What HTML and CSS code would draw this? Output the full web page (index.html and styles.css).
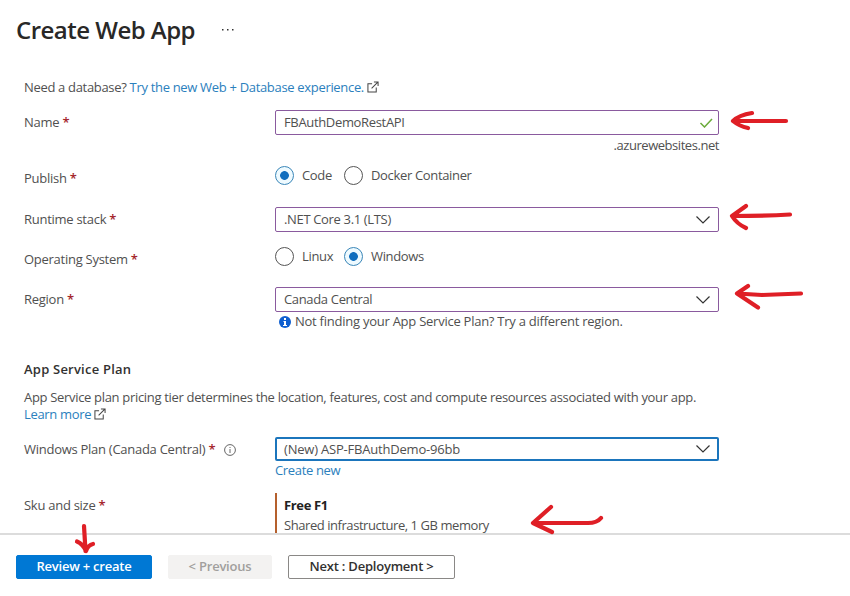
FILE: index.html
```html
<!DOCTYPE html>
<html lang="en">
<head>
    <meta charset="UTF-8">
    <meta name="viewport" content="width=device-width, initial-scale=1.0">
    <title>Create Web App</title>
    <link rel="stylesheet" href="styles.css">
</head>
<body>
    <header class="header">
        <h1>Create Web App</h1>
        <svg class="more" width="12" height="2" viewBox="0 0 12 2"><path d="M0 0h1.5v1.5H0zM5 0h1.5v1.5H5zM10 0h1.5v1.5H10z" fill="#333"/></svg>
    </header>

    <main class="content">
        <p class="intro">Need a database? <a href="#">Try the new Web + Database experience.</a>
            <svg class="external" width="12" height="12" viewBox="0 0 13 13"><path d="M5.5 3H1v9h9V7M7.5 1H12v4.5M12 1L5 8"/></svg>
        </p>

        <form id="webAppForm">
            <div class="row name">
                <label>Name <b>*</b></label>
                <div>
                    <div class="field">
                        <span>FBAuthDemoRestAPI</span>
                        <svg class="check" width="14" height="10" viewBox="0 0 14 10"><path d="M1.5 5l4 4L13 1"/></svg>
                    </div>
                    <div class="suffix">.azurewebsites.net</div>
                </div>
            </div>

            <div class="row publish">
                <label>Publish <b>*</b></label>
                <div class="radios">
                    <span class="radio checked"></span><span class="first">Code</span>
                    <span class="radio"></span><span>Docker Container</span>
                </div>
            </div>

            <div class="row stack">
                <label>Runtime stack <b>*</b></label>
                <div class="field">
                    <span>.NET Core 3.1 (LTS)</span>
                    <svg class="chevron" width="14" height="8" viewBox="0 0 14 8"><path d="M.5.5L7 7 13.5.5"/></svg>
                </div>
            </div>

            <div class="row os">
                <label>Operating System <b>*</b></label>
                <div class="radios">
                    <span class="radio"></span><span class="first">Linux</span>
                    <span class="radio checked"></span><span>Windows</span>
                </div>
            </div>

            <div class="row region">
                <label>Region <b>*</b></label>
                <div>
                    <div class="field">
                        <span>Canada Central</span>
                        <svg class="chevron" width="14" height="8" viewBox="0 0 14 8"><path d="M.5.5L7 7 13.5.5"/></svg>
                    </div>
                    <div class="hint">
                        <svg width="12" height="12" viewBox="0 0 12 12"><circle cx="6" cy="6" r="6" fill="#0f5fd0"/><path d="M5 2h2v2H5zM4.5 5H7v4h1v1H4V9h1V6h-.5z" fill="#fff"/></svg>
                        <span>Not finding your App Service Plan? Try a different region.</span>
                    </div>
                </div>
            </div>

            <h2>App Service Plan</h2>
            <p class="description">App Service plan pricing tier determines the location, features, cost and compute resources associated with your app.<br>
                <a href="#">Learn more</a>
                <svg class="external" width="12" height="12" viewBox="0 0 13 13"><path d="M5.5 3H1v9h9V7M7.5 1H12v4.5M12 1L5 8"/></svg>
            </p>

            <div class="row plan">
                <label>Windows Plan (Canada Central) <b>*</b>
                    <svg class="info" width="12" height="12" viewBox="0 0 12 12"><circle cx="6" cy="6" r="5.4"/><path d="M6 5v4M6 3v1"/></svg>
                </label>
                <div>
                    <div class="field active">
                        <span>(New) ASP-FBAuthDemo-96bb</span>
                        <svg class="chevron" width="14" height="8" viewBox="0 0 14 8"><path d="M.5.5L7 7 13.5.5"/></svg>
                    </div>
                    <a class="create" href="#">Create new</a>
                </div>
            </div>

            <div class="row sku">
                <label>Sku and size <b>*</b></label>
                <div class="tier">
                    <strong>Free F1</strong>
                    <span>Shared infrastructure, 1 GB memory</span>
                </div>
            </div>
        </form>
    </main>

    <footer class="footer">
        <button class="primary">Review + create</button>
        <button class="previous" disabled>&lt; Previous</button>
        <button class="next">Next : Deployment &gt;</button>
    </footer>

    <!-- hand-drawn arrows over the form -->
    <svg class="arrows" width="850" height="596" viewBox="0 0 850 596">
        <path d="M786 121H733M752 113Q739 115 733 121Q739 126 748 128"/>
        <path d="M790 214.5Q762 216 732 216M746 206L732 216Q737 224 746 228"/>
        <path d="M801 293.5L762 295 737 293.5M748 286L737 293.5 758 307.5"/>
        <path d="M601 518Q597 523 588 523H533M551 507L533 523 552 532"/>
        <path d="M84 526L85.5 551M77 541.5Q83 544 86 551Q88 545 93 544"/>
    </svg>
</body>
</html>
```
FILE: styles.css
```css
* {
    box-sizing: border-box;
}
body {
    margin: 0;
    height: 596px;
    overflow: hidden;
    display: flex;
    flex-direction: column;
    font-family: 'Open Sans', 'Noto Sans', sans-serif;
    font-size: 13px;
    line-height: 17px;
    letter-spacing: -0.34px;
    color: #505050;
    background: #fff;
}
h1, h2, p {
    margin: 0;
}
a {
    color: #2b80bd;
    text-decoration: none;
}
svg {
    flex: none;
}
.header {
    height: 60px;
    padding-left: 16px;
    display: flex;
    align-items: center;
}
h1 {
    width: 206px;
    font-size: 24px;
    line-height: 32px;
    font-weight: 600;
    letter-spacing: -0.52px;
    color: #292827;
}
.content {
    height: 473px;
    padding: 19px 24px 0;
    overflow: hidden;
}
.intro {
    letter-spacing: -0.32px;
}
.external {
    vertical-align: -1px;
    fill: none;
    stroke: #444;
    stroke-width: 1.1;
}
.row {
    display: grid;
    grid-template-columns: 251px 444px;
}
.row label {
    padding-top: 4px;
    white-space: nowrap;
    letter-spacing: -0.27px;
}
label b {
    font-weight: 600;
    color: #a4262c;
}
.name, .plan, .sku {
    margin-top: 14px;
}
.publish {
    margin-top: 12px;
}
.os {
    margin-top: 15px;
}
.publish, .os {
    height: 19px;
}
.stack {
    margin-top: 22px;
}
.region {
    margin-top: 21px;
}
.field {
    height: 25px;
    padding: 0 8px;
    display: flex;
    align-items: center;
    justify-content: space-between;
    border: 1px solid #8a5a9e;
    border-radius: 2px;
}
.field.active {
    height: 24px;
    padding: 0 7px;
    border: 2px solid #1b75bc;
    letter-spacing: -0.2px;
}
.check {
    margin-right: -3px;
    fill: none;
    stroke: #6bab3a;
    stroke-width: 1.5;
}
.chevron {
    fill: none;
    stroke: #333;
    stroke-width: 1.2;
}
.suffix {
    margin-top: 2px;
    text-align: right;
    letter-spacing: -0.45px;
}
.radios {
    display: flex;
    align-items: center;
    height: 19px;
}
.radio {
    width: 19px;
    height: 19px;
    margin-right: 8px;
    border: 1px solid #555;
    border-radius: 50%;
}
.radio.checked {
    border-color: #3a86b8;
    background: radial-gradient(circle, #106ebe 4px, #eefaff 4.7px);
}
.radios .first {
    width: 42px;
}
.hint {
    padding: 1px 0 0 4px;
    display: flex;
    align-items: center;
    gap: 4px;
    letter-spacing: -0.25px;
}
h2 {
    margin-top: 31px;
    font-size: 13px;
    line-height: 17px;
    font-weight: 600;
    letter-spacing: 0.22px;
    color: #323130;
}
.description {
    margin-top: 11px;
    white-space: nowrap;
    letter-spacing: -0.32px;
}
.info {
    margin-left: 6px;
    vertical-align: -2px;
    fill: none;
    stroke: #666;
}
.create {
    display: block;
    margin-top: 1px;
}
.tier {
    height: 50px;
    padding: 4px 0 0 7px;
    border-left: 2px solid #b5602d;
}
.tier strong, .tier span {
    display: block;
}
.tier strong {
    margin-bottom: 3px;
    color: #222;
}
.tier span {
    letter-spacing: -0.44px;
}
.footer {
    height: 63px;
    padding: 20px 16px;
    display: flex;
    gap: 16px;
    border-top: 2px solid #dcdcdc;
}
button {
    height: 24px;
    padding: 0 0 2px;
    border: 1px solid #8a8886;
    border-radius: 2px;
    background: #fff;
    color: #323130;
    font-family: inherit;
    font-size: 13px;
    font-weight: 600;
    line-height: 17px;
    letter-spacing: -0.22px;
}
.primary {
    width: 136px;
    border-color: #0078d4;
    background: #0078d4;
    color: #fff;
}
.previous {
    width: 104px;
    border-color: #f3f2f1;
    background: #f3f2f1;
    color: #a19f9d;
}
.next {
    width: 167px;
}
.arrows {
    position: absolute;
    top: 0;
    left: 0;
    pointer-events: none;
    fill: none;
    stroke: #df1f26;
    stroke-width: 4.2;
    stroke-linecap: round;
    stroke-linejoin: round;
}
```
